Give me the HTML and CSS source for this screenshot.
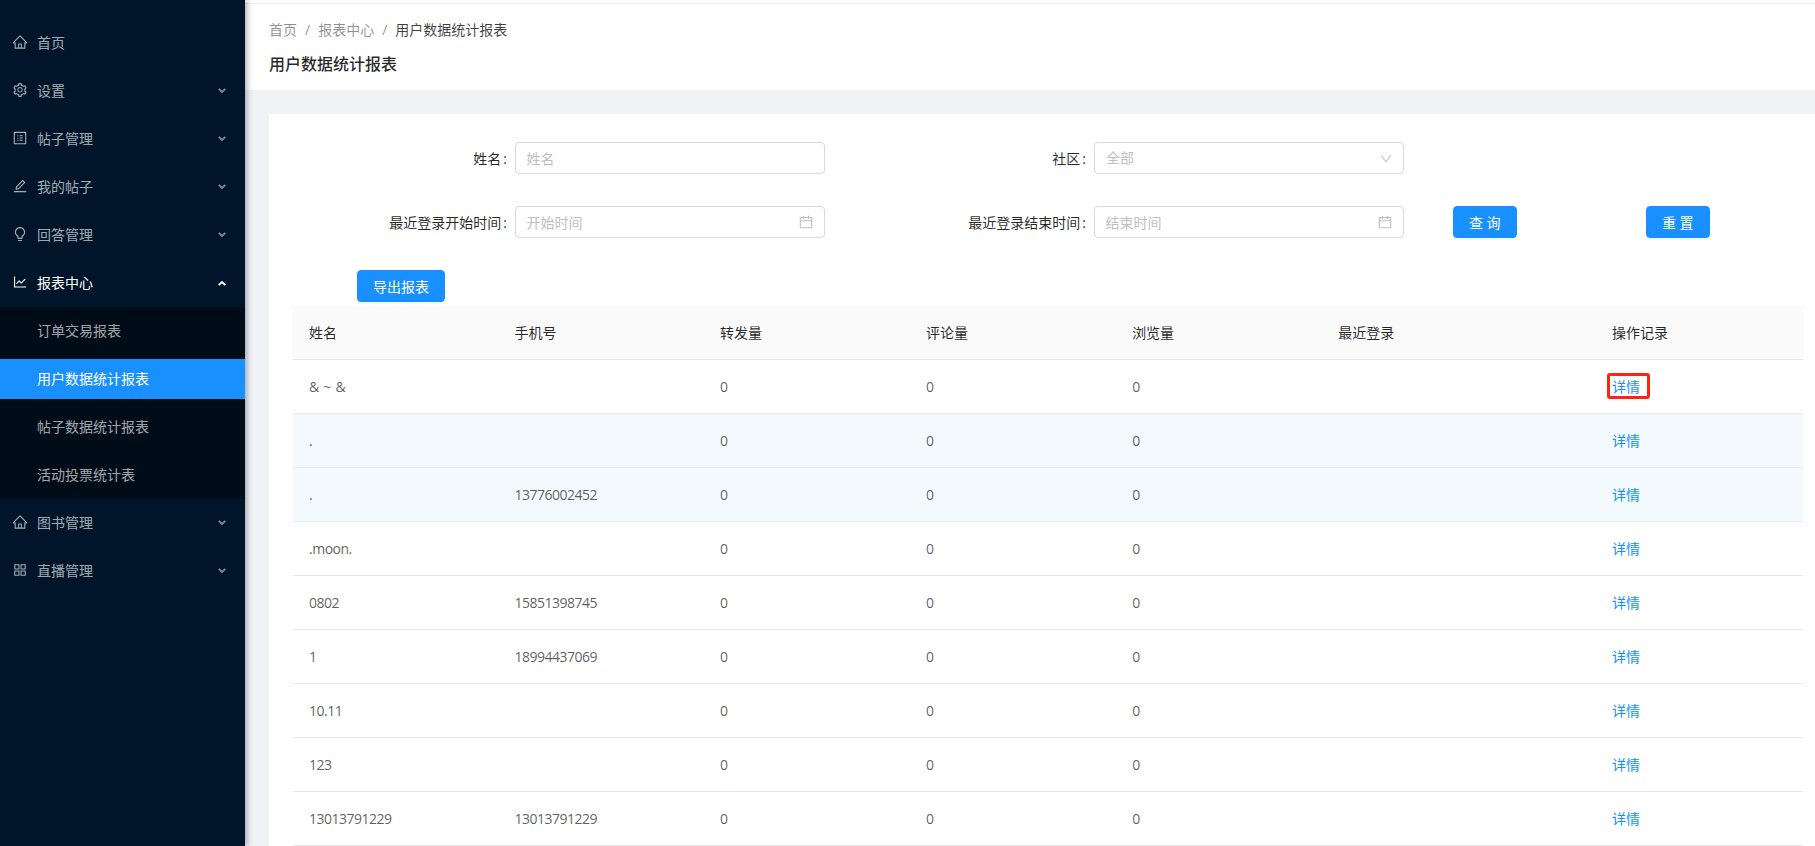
FILE: index.html
```html
<!DOCTYPE html>
<html lang="zh-CN">
<head>
    <meta charset="UTF-8">
    <meta name="viewport" content="width=device-width, initial-scale=1.0">
    <title>用户数据统计报表</title>
    <link rel="stylesheet" href="styles.css">
</head>
<body>
    <svg class="sprite" xmlns="http://www.w3.org/2000/svg">
        <symbol id="i-home" viewBox="64 64 896 896"><path d="M946.5 505L560.1 118.8l-25.9-25.9a31.5 31.5 0 0 0-44.4 0L77.5 505a63.9 63.9 0 0 0-18.8 46c.4 35.2 29.7 63.3 64.9 63.3h42.5V940h691.8V614.3h43.4c17.1 0 33.2-6.7 45.3-18.8a63.6 63.6 0 0 0 18.7-45.3c0-17-6.7-33.1-18.8-45.2zM568 868H456V664h112v204zm217.9-325.7V868H632V640c0-22.1-17.9-40-40-40H432c-22.1 0-40 17.9-40 40v228H238.1V542.3h-96l370-369.7 23.1 23.1L882 542.3h-96.1z"/></symbol>
        <symbol id="i-setting" viewBox="64 64 896 896"><path d="M924.8 625.7l-65.5-56c3.1-19 4.7-38.4 4.7-57.8s-1.6-38.8-4.7-57.8l65.5-56a32.03 32.03 0 0 0 9.3-35.2l-.9-2.6a443.74 443.74 0 0 0-79.7-137.9l-1.8-2.1a32.12 32.12 0 0 0-35.1-9.5l-81.3 28.9c-30-24.6-63.5-44-99.7-57.6l-15.7-85a32.05 32.05 0 0 0-25.8-25.7l-2.7-.5c-52.1-9.4-106.9-9.4-159 0l-2.7.5a32.05 32.05 0 0 0-25.8 25.7l-15.8 85.4a351.86 351.86 0 0 0-99 57.4l-81.9-29.1a32 32 0 0 0-35.1 9.5l-1.8 2.1a446.02 446.02 0 0 0-79.7 137.9l-.9 2.6c-4.5 12.5-.8 26.5 9.3 35.2l66.3 56.6c-3.1 18.8-4.6 38-4.6 57.1 0 19.2 1.5 38.4 4.6 57.1L99 625.5a32.03 32.03 0 0 0-9.3 35.2l.9 2.6c18.1 50.4 44.9 96.9 79.7 137.9l1.8 2.1a32.12 32.12 0 0 0 35.1 9.5l81.9-29.1c29.8 24.5 63.1 43.9 99 57.4l15.8 85.4a32.05 32.05 0 0 0 25.8 25.7l2.7.5a449.4 449.4 0 0 0 159 0l2.7-.5a32.05 32.05 0 0 0 25.8-25.7l15.7-85a350 350 0 0 0 99.7-57.6l81.3 28.9a32 32 0 0 0 35.1-9.5l1.8-2.1c34.8-41.1 61.6-87.5 79.7-137.9l.9-2.6c4.5-12.3.8-26.3-9.3-35zM788.3 465.9c2.5 15.1 3.8 30.6 3.8 46.1s-1.3 31-3.8 46.1l-6.6 40.1 74.7 63.9a370.03 370.03 0 0 1-42.6 73.6L721 702.8l-31.4 25.8c-23.9 19.6-50.5 35-79.3 45.8l-38.1 14.3-17.9 97a377.5 377.5 0 0 1-85 0l-17.9-97.2-37.8-14.5c-28.5-10.8-55-26.2-78.7-45.7l-31.4-25.9-93.4 33.2c-17-22.9-31.2-47.6-42.6-73.6l75.5-64.5-6.5-40c-2.4-14.9-3.7-30.3-3.7-45.5 0-15.3 1.2-30.6 3.7-45.5l6.5-40-75.5-64.5c11.3-26.1 25.6-50.7 42.6-73.6l93.4 33.2 31.4-25.9c23.7-19.5 50.2-34.9 78.7-45.7l37.9-14.3 17.9-97.2c28.1-3.2 56.8-3.2 85 0l17.9 97 38.1 14.3c28.7 10.8 55.4 26.2 79.3 45.8l31.4 25.8 92.8-32.9c17 22.9 31.2 47.6 42.6 73.6L781.8 426l6.5 39.9zM512 326c-97.2 0-176 78.8-176 176s78.8 176 176 176 176-78.8 176-176-78.8-176-176-176zm79.2 255.2A111.6 111.6 0 0 1 512 614c-29.9 0-58-11.7-79.2-32.8A111.6 111.6 0 0 1 400 502c0-29.9 11.7-58 32.8-79.2C454 401.6 482.1 390 512 390c29.9 0 58 11.6 79.2 32.8A111.6 111.6 0 0 1 624 502c0 29.9-11.7 58-32.8 79.2z"/></symbol>
        <symbol id="i-profile" viewBox="64 64 896 896"><path d="M880 112H144c-17.7 0-32 14.3-32 32v736c0 17.7 14.3 32 32 32h736c17.7 0 32-14.3 32-32V144c0-17.7-14.3-32-32-32zm-40 728H184V184h656v656zM492 400h184c4.4 0 8-3.6 8-8v-48c0-4.4-3.6-8-8-8H492c-4.4 0-8 3.6-8 8v48c0 4.4 3.6 8 8 8zm0 144h184c4.4 0 8-3.6 8-8v-48c0-4.4-3.6-8-8-8H492c-4.4 0-8 3.6-8 8v48c0 4.4 3.6 8 8 8zm0 144h184c4.4 0 8-3.6 8-8v-48c0-4.4-3.6-8-8-8H492c-4.4 0-8 3.6-8 8v48c0 4.4 3.6 8 8 8zM340 368a40 40 0 1 0 80 0 40 40 0 1 0-80 0zm0 144a40 40 0 1 0 80 0 40 40 0 1 0-80 0zm0 144a40 40 0 1 0 80 0 40 40 0 1 0-80 0z"/></symbol>
        <symbol id="i-edit" viewBox="64 64 896 896"><path d="M257.7 752c2 0 4-.2 6-.5L431.9 722c2-.4 3.9-1.3 5.3-2.8l423.9-423.9a9.96 9.96 0 0 0 0-14.1L694.9 114.9c-1.9-1.9-4.4-2.9-7.1-2.9s-5.2 1-7.1 2.9L256.8 538.8c-1.5 1.5-2.4 3.3-2.8 5.3l-29.5 168.2a33.5 33.5 0 0 0 9.4 29.8c6.6 6.4 14.9 9.9 23.8 9.9zm67.4-174.4L687.8 215l73.3 73.3-362.7 362.6-88.9 15.7 15.6-89zM880 836H144c-17.7 0-32 14.3-32 32v36c0 4.4 3.6 8 8 8h784c4.4 0 8-3.6 8-8v-36c0-17.7-14.3-32-32-32z"/></symbol>
        <symbol id="i-bulb" viewBox="64 64 896 896"><path d="M632 888H392c-4.4 0-8 3.6-8 8v32c0 17.7 14.3 32 32 32h192c17.7 0 32-14.3 32-32v-32c0-4.4-3.6-8-8-8zM512 64c-181.1 0-328 146.9-328 328 0 121.4 66 227.4 164 284.1V792c0 17.7 14.3 32 32 32h264c17.7 0 32-14.3 32-32V676.1c98-56.7 164-162.7 164-284.1 0-181.1-146.9-328-328-328zm127.9 549.8L604 634.6V752H420V634.6l-35.9-20.8C305.4 568.3 256 484.5 256 392c0-141.4 114.6-256 256-256s256 114.6 256 256c0 92.5-49.4 176.3-128.1 221.8z"/></symbol>
        <symbol id="i-chart" viewBox="64 64 896 896"><path d="M888 792H200V168c0-4.4-3.6-8-8-8h-56c-4.4 0-8 3.6-8 8v688c0 4.4 3.6 8 8 8h752c4.4 0 8-3.6 8-8v-56c0-4.4-3.6-8-8-8zM305.8 637.7c3.1 3.1 8.1 3.1 11.3 0l138.3-137.6L583 628.5c3.1 3.1 8.2 3.1 11.3 0l275.4-275.3c3.1-3.1 3.1-8.2 0-11.3l-39.6-39.6a8.03 8.03 0 0 0-11.3 0l-230 229.9L461.4 404a8.03 8.03 0 0 0-11.3 0L266.3 586.7a8.03 8.03 0 0 0 0 11.4l39.5 39.6z"/></symbol>
        <symbol id="i-apps" viewBox="64 64 896 896"><path d="M464 144H160c-8.8 0-16 7.2-16 16v304c0 8.8 7.2 16 16 16h304c8.8 0 16-7.2 16-16V160c0-8.8-7.2-16-16-16zm-52 268H212V212h200v200zm452-268H560c-8.8 0-16 7.2-16 16v304c0 8.8 7.2 16 16 16h304c8.8 0 16-7.2 16-16V160c0-8.8-7.2-16-16-16zm-52 268H612V212h200v200zM464 544H160c-8.8 0-16 7.2-16 16v304c0 8.8 7.2 16 16 16h304c8.8 0 16-7.2 16-16V560c0-8.8-7.2-16-16-16zm-52 268H212V612h200v200zm452-268H560c-8.8 0-16 7.2-16 16v304c0 8.8 7.2 16 16 16h304c8.8 0 16-7.2 16-16V560c0-8.8-7.2-16-16-16zm-52 268H612V612h200v200z"/></symbol>
        <symbol id="i-calendar" viewBox="64 64 896 896"><path d="M880 184H712v-64c0-4.4-3.6-8-8-8h-56c-4.4 0-8 3.6-8 8v64H384v-64c0-4.4-3.6-8-8-8h-56c-4.4 0-8 3.6-8 8v64H144c-17.7 0-32 14.3-32 32v664c0 17.7 14.3 32 32 32h736c17.7 0 32-14.3 32-32V216c0-17.7-14.3-32-32-32zm-40 656H184V460h656v380zM184 392V256h128v48c0 4.4 3.6 8 8 8h56c4.4 0 8-3.6 8-8v-48h256v48c0 4.4 3.6 8 8 8h56c4.4 0 8-3.6 8-8v-48h128v136H184z"/></symbol>
        <symbol id="i-down" viewBox="64 64 896 896"><path d="M884 256h-75c-5.1 0-9.9 2.5-12.9 6.6L512 654.2 227.9 262.6c-3-4.1-7.8-6.6-12.9-6.6h-75c-6.5 0-10.3 7.4-6.5 12.7l352.6 486.1c12.8 17.6 39 17.6 51.7 0l352.6-486.1c3.9-5.3.1-12.7-6.4-12.7z"/></symbol>
        <symbol id="i-arrow" viewBox="0 0 8 5"><path d="M.7.8 4 4 7.3.8" fill="none" stroke="currentColor" stroke-width="1.8"/></symbol>
    </svg>

    <div class="layout">
        <aside class="sider">
            <ul class="menu">
                <li class="menu-item"><svg class="icon"><use href="#i-home"/></svg>首页</li>
                <li class="menu-item"><svg class="icon"><use href="#i-setting"/></svg>设置<svg class="arrow"><use href="#i-arrow"/></svg></li>
                <li class="menu-item"><svg class="icon"><use href="#i-profile"/></svg>帖子管理<svg class="arrow"><use href="#i-arrow"/></svg></li>
                <li class="menu-item"><svg class="icon"><use href="#i-edit"/></svg>我的帖子<svg class="arrow"><use href="#i-arrow"/></svg></li>
                <li class="menu-item"><svg class="icon"><use href="#i-bulb"/></svg>回答管理<svg class="arrow"><use href="#i-arrow"/></svg></li>
                <li class="menu-item open"><svg class="icon"><use href="#i-chart"/></svg>报表中心<svg class="arrow"><use href="#i-arrow"/></svg></li>
                <li>
                    <ul class="submenu">
                        <li class="menu-item">订单交易报表</li>
                        <li class="menu-item selected">用户数据统计报表</li>
                        <li class="menu-item">帖子数据统计报表</li>
                        <li class="menu-item">活动投票统计表</li>
                    </ul>
                </li>
                <li class="menu-item"><svg class="icon"><use href="#i-home"/></svg>图书管理<svg class="arrow"><use href="#i-arrow"/></svg></li>
                <li class="menu-item"><svg class="icon"><use href="#i-apps"/></svg>直播管理<svg class="arrow"><use href="#i-arrow"/></svg></li>
            </ul>
        </aside>

        <main class="main">
            <header class="page-header">
                <nav class="breadcrumb">
                    <span>首页</span><i>/</i><span>报表中心</span><i>/</i><span class="current">用户数据统计报表</span>
                </nav>
                <h1>用户数据统计报表</h1>
            </header>

            <section class="card">
                <form class="search-form">
                    <div class="form-row">
                        <div class="form-item first">
                            <label>姓名</label>
                            <div class="control"><input type="text" placeholder="姓名"></div>
                        </div>
                        <div class="form-item second">
                            <label>社区</label>
                            <div class="control select">
                                <span>全部</span>
                                <svg class="suffix small"><use href="#i-down"/></svg>
                            </div>
                        </div>
                    </div>
                    <div class="form-row">
                        <div class="form-item first">
                            <label>最近登录开始时间</label>
                            <div class="control"><input type="text" placeholder="开始时间"><svg class="suffix"><use href="#i-calendar"/></svg></div>
                        </div>
                        <div class="form-item second">
                            <label>最近登录结束时间</label>
                            <div class="control"><input type="text" placeholder="结束时间"><svg class="suffix"><use href="#i-calendar"/></svg></div>
                        </div>
                        <button type="button" class="btn btn-query">查 询</button>
                        <button type="button" class="btn btn-reset">重 置</button>
                    </div>
                </form>

                <button type="button" class="btn btn-export">导出报表</button>

                <table class="report-table">
                    <colgroup>
                        <col class="col-a"><col class="col-a"><col class="col-b"><col class="col-b"><col class="col-b"><col class="col-c"><col class="col-d">
                    </colgroup>
                    <thead>
                        <tr><th>姓名</th><th>手机号</th><th>转发量</th><th>评论量</th><th>浏览量</th><th>最近登录</th><th>操作记录</th></tr>
                    </thead>
                    <tbody>
                        <tr><td class="amp">&amp; ~ &amp;</td><td></td><td>0</td><td>0</td><td>0</td><td></td><td><a href="#" class="marked">详情</a></td></tr>
                        <tr class="tint"><td>.</td><td></td><td>0</td><td>0</td><td>0</td><td></td><td><a href="#">详情</a></td></tr>
                        <tr class="tint"><td>.</td><td>13776002452</td><td>0</td><td>0</td><td>0</td><td></td><td><a href="#">详情</a></td></tr>
                        <tr><td>.moon.</td><td></td><td>0</td><td>0</td><td>0</td><td></td><td><a href="#">详情</a></td></tr>
                        <tr><td>0802</td><td>15851398745</td><td>0</td><td>0</td><td>0</td><td></td><td><a href="#">详情</a></td></tr>
                        <tr><td>1</td><td>18994437069</td><td>0</td><td>0</td><td>0</td><td></td><td><a href="#">详情</a></td></tr>
                        <tr><td>10.11</td><td></td><td>0</td><td>0</td><td>0</td><td></td><td><a href="#">详情</a></td></tr>
                        <tr><td>123</td><td></td><td>0</td><td>0</td><td>0</td><td></td><td><a href="#">详情</a></td></tr>
                        <tr><td>13013791229</td><td>13013791229</td><td>0</td><td>0</td><td>0</td><td></td><td><a href="#">详情</a></td></tr>
                    </tbody>
                </table>
            </section>
        </main>
    </div>
</body>
</html>
```

FILE: styles.css
```css
* {
    box-sizing: border-box;
}

html,
body {
    height: 100%;
    margin: 0;
    overflow: hidden;
}

body {
    font-family: "Open Sans", "Noto Sans CJK SC", sans-serif;
    font-size: 14px;
    line-height: 21px;
    color: rgba(0, 0, 0, 0.65);
    background-color: #f0f2f5;
}

ul {
    list-style: none;
    margin: 0;
    padding: 0;
}

.sprite {
    display: none;
}

.layout {
    display: flex;
    height: 846px;
}

/* sidebar */
.sider {
    position: relative;
    z-index: 2;
    flex: 0 0 245px;
    padding-top: 23px;
    background-color: #001529;
    box-shadow: 2px 0 6px rgba(0, 21, 41, 0.35);
    color: rgba(255, 255, 255, 0.65);
}

.menu-item {
    position: relative;
    display: flex;
    align-items: center;
    height: 40px;
    margin: 0 0 8px;
    padding: 0 0 2px 13px;
}

.menu > .menu-item.open {
    margin-bottom: 4px;
    color: #fff;
}

.icon {
    width: 14px;
    height: 14px;
    margin-right: 10px;
    fill: currentColor;
    flex: none;
}

.arrow {
    position: absolute;
    right: 19px;
    top: 17px;
    width: 8px;
    height: 5px;
    color: rgba(255, 255, 255, 0.5);
}

.open .arrow {
    top: 18px;
    transform: rotate(180deg);
    color: #fff;
}

.submenu {
    margin-bottom: 4px;
    padding: 4px 0;
    background-color: #000c17;
}

.submenu .menu-item {
    padding-left: 37px;
}

.submenu .menu-item:last-child {
    margin-bottom: 0;
}

.submenu .selected {
    background-color: #1890ff;
    color: #fff;
}

/* main */
.main {
    flex: 1;
    min-width: 0;
}

.page-header {
    height: 90px;
    padding: 16px 24px 0;
    background-color: #fff;
    border-top: 3px solid #fff;
    box-shadow: inset 0 1px 0 #eee;
}

.breadcrumb {
    display: flex;
    color: rgba(0, 0, 0, 0.45);
}

.breadcrumb i {
    margin: 0 8px;
    font-style: normal;
}

.breadcrumb .current {
    color: rgba(0, 0, 0, 0.75);
}

.page-header h1 {
    margin: 12px 0 0;
    font-size: 16px;
    line-height: 24px;
    font-weight: 500;
    color: rgba(0, 0, 0, 0.85);
}

.card {
    margin: 24px 0 0 24px;
    padding: 28px 12px 0 24px;
    height: 732px;
    background-color: #fff;
}

.form-row {
    display: flex;
    align-items: center;
    margin-bottom: 32px;
}

.form-item {
    display: flex;
    align-items: center;
}

.form-item.first {
    flex: 0 0 532px;
}

.form-item.second {
    flex: 0 0 579px;
}

.form-item label {
    flex: 1;
    text-align: right;
    white-space: nowrap;
    color: rgba(0, 0, 0, 0.85);
}

.form-item label::after {
    content: ":";
    margin: 0 8px 0 2px;
}

.control {
    position: relative;
    flex: none;
    width: 310px;
    height: 32px;
}

.control input,
.select {
    height: 32px;
    padding: 0 11px;
    border: 1px solid #d9d9d9;
    border-radius: 4px;
    background: #fff;
    font: inherit;
    color: rgba(0, 0, 0, 0.65);
    line-height: 30px;
}

.control input {
    display: block;
    width: 100%;
    padding: 0 10.5px;
}

.control input::placeholder {
    color: #bfbfbf;
}

.select span {
    color: #bfbfbf;
}

.suffix {
    position: absolute;
    top: 9px;
    right: 12px;
    width: 14px;
    height: 14px;
    fill: rgba(0, 0, 0, 0.25);
}

.suffix.small {
    top: 10px;
    right: 11px;
    width: 12px;
    height: 12px;
}

.btn {
    height: 32px;
    padding: 0 15px;
    border: 1px solid #1890ff;
    border-radius: 4px;
    background-color: #1890ff;
    color: #fff;
    font: inherit;
    box-shadow: 0 2px 0 rgba(0, 0, 0, 0.045);
    cursor: pointer;
}

.btn-query,
.btn-reset {
    width: 63.5px;
    padding: 0;
}

.btn-query {
    margin-left: 49px;
}

.btn-reset {
    margin-left: 129.5px;
}

.btn-export {
    display: block;
    width: 88px;
    margin: 0 0 4px 64px;
}

/* table */
.report-table {
    width: 1510px;
    border-collapse: separate;
    border-spacing: 0;
    table-layout: fixed;
}

.col-a {
    width: 205.5px;
}

.col-b {
    width: 206px;
}

.col-c {
    width: 273.7px;
}

.col-d {
    width: 207px;
}

.report-table th,
.report-table td {
    height: 54px;
    padding: 0 16px;
    border-bottom: 1px solid #e8e8e8;
    text-align: left;
    font-weight: 400;
}

.report-table th {
    background-color: #fafafa;
    color: rgba(0, 0, 0, 0.85);
}

.report-table td {
    letter-spacing: -0.5px;
}

.report-table .amp {
    letter-spacing: 0;
    word-spacing: 0.5px;
}

.report-table .tint td {
    background-color: #f3fafe;
}

.report-table a {
    position: relative;
    color: #1890ff;
    text-decoration: none;
    letter-spacing: 0;
}

.marked::after {
    content: "";
    position: absolute;
    left: -5px;
    right: -10px;
    top: -4px;
    bottom: -3px;
    border: 3px solid #ff2215;
    border-radius: 3px;
}
```
